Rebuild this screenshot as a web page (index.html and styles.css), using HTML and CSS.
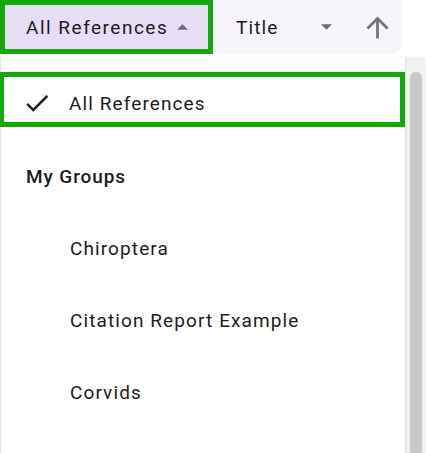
FILE: index.html
```html
<!DOCTYPE html>
<html lang="en">
<head>
<meta charset="utf-8">
<link rel="stylesheet" href="styles.css">
</head>
<body>
<div class="toolbar">
  <button class="select select-open">
    <span class="select-label">All References</span>
    <svg class="caret" viewBox="0 0 10 5" width="11" height="6"><path d="M0 5 L5 0 L10 5 Z"/></svg>
  </button>
  <div class="sort">
    <span class="sort-label">Title</span>
    <svg class="caret down" viewBox="0 0 10 5" width="11" height="6"><path d="M0 0 L5 5 L10 0 Z"/></svg>
    <svg class="arrow-up" viewBox="0 0 24 24"><path d="M4 12l1.41 1.41L11 7.83V20h2V7.83l5.58 5.59L20 12l-8-8-8 8z"/></svg>
  </div>
</div>

<div class="menu">
  <div class="menu-list">
    <div class="menu-item selected">
      <svg class="check" viewBox="0 0 24 24"><path d="M9 16.17L4.83 12l-1.42 1.41L9 19 21 7l-1.41-1.41z"/></svg>
      <span>All References</span>
    </div>
    <div class="menu-heading">My Groups</div>
    <div class="menu-item nested"><span>Chiroptera</span></div>
    <div class="menu-item nested"><span>Citation Report Example</span></div>
    <div class="menu-item nested"><span>Corvids</span></div>
  </div>
  <div class="scrollbar"><div class="thumb"></div></div>
</div>
</body>
</html>
```
FILE: styles.css
```css
html, body {
  margin: 0;
  padding: 0;
  background: #fff;
  overflow: hidden;
  height: 453px;
}

body {
  font-family: Roboto, "Noto Sans", sans-serif;
  color: #1d1b20;
}

.toolbar {
  display: flex;
  height: 54px;
}

.select {
  box-sizing: border-box;
  width: 213px;
  height: 54px;
  border: 5px solid #15a80a;
  background: #e7def5;
  display: flex;
  align-items: center;
  padding: 0 0 0 21px;
  margin: 0;
  font: inherit;
  color: inherit;
  cursor: pointer;
}

.select-label {
  font-size: 19px;
  letter-spacing: 1.5px;
}

.caret {
  fill: #6f6c74;
  margin-left: 9px;
}

.sort {
  width: 189px;
  background: #f7f4fc;
  border-bottom-right-radius: 10px;
  display: flex;
  align-items: center;
  padding-left: 23px;
  box-sizing: border-box;
}

.sort-label {
  font-size: 19px;
  letter-spacing: 1.1px;
  width: 85px;
}

.caret.down {
  margin-left: 0;
}

.arrow-up {
  fill: #757279;
  margin-left: 29px;
  width: 33px;
  height: 33px;
}

.menu {
  margin-top: 3px;
  width: 424px;
  height: 400px;
  display: flex;
  background: #fff;
  border-left: 1px solid #e4e4e4;
  box-shadow: 0 1px 3px rgba(0, 0, 0, 0.12);
}

.menu-list {
  flex: 1;
  padding-top: 15px;
}

.menu-item {
  box-sizing: border-box;
  height: 72px;
  display: flex;
  align-items: center;
  font-size: 19px;
  letter-spacing: 1.1px;
  padding-left: 69px;
}

.menu-item.selected {
  height: 55px;
  border: 5px solid #15a80a;
  border-left-width: 4px;
  margin-left: -1px;
  padding: 7px 0 0 18px;
}

.check {
  fill: #1d1b20;
  width: 30px;
  height: 30px;
  margin-right: 17px;
}

.menu-heading {
  box-sizing: border-box;
  height: 85px;
  display: flex;
  align-items: center;
  font-size: 19px;
  letter-spacing: 0.9px;
  font-weight: 500;
  padding: 13px 0 0 25px;
}

.scrollbar {
  width: 20px;
  background: #f1f1f1;
  border-left: 1px solid #e0e0e0;
  padding: 0 3px 0 4px;
  box-sizing: border-box;
}

.thumb {
  background: #c9c9c9;
  border-radius: 8px 8px 0 0;
  height: 100%;
  margin-top: 15px;
}
```
